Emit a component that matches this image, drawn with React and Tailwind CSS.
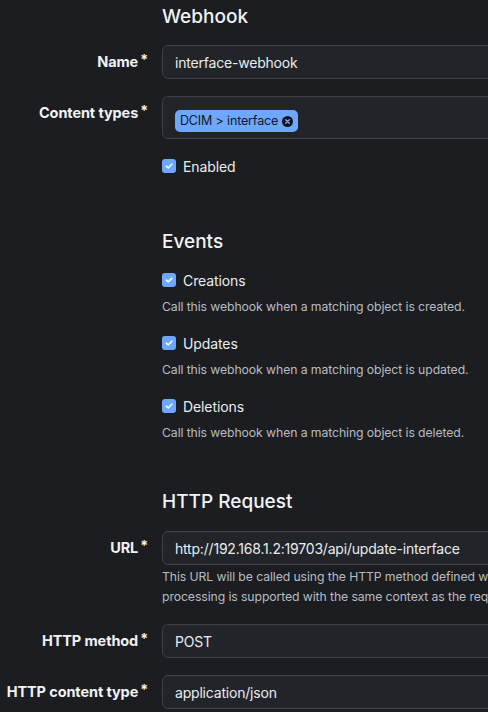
import React from "react";

const font = { fontFamily: "Inter, 'Noto Sans', sans-serif" };

function Label({ children, top }) {
  return (
    <div className={`w-[148px] shrink-0 flex justify-end ${top ? "items-start" : "items-center"} h-[34px] whitespace-nowrap`}>
      <span className="text-[14.5px] font-bold text-[#f1f3f5] leading-[34px] tracking-[-0.1px]">{children}</span>
      <span className="text-[14px] font-bold text-[#f1f3f5] leading-none ml-[2px] mt-[8px] self-start">*</span>
    </div>
  );
}

function Input({ value, className = "" }) {
  return (
    <div className={`ml-[14px] w-[360px] shrink-0 h-[34px] rounded-[6px] border border-[#3d4148] bg-[#212428] flex items-center pl-[12px] text-[14px] tracking-[-0.2px] text-[#e9ecef] whitespace-nowrap ${className}`}>
      {value}
    </div>
  );
}

function Check({ label }) {
  return (
    <div className="flex items-center h-[24px] pl-[162px]">
      <div className="w-[14px] h-[14px] rounded-[3px] bg-[#6ea8fe] flex items-center justify-center">
        <svg width="10" height="10" viewBox="0 0 10 10" fill="none">
          <path d="M2.3 5.2 L4.2 7 L7.8 3.2" stroke="#fff" strokeWidth="1.6" strokeLinecap="round" strokeLinejoin="round" />
        </svg>
      </div>
      <span className="ml-[7px] text-[14px] tracking-[-0.1px] text-[#e9ecef]">{label}</span>
    </div>
  );
}

function Desc({ children, className = "" }) {
  return (
    <div className={`pl-[162px] h-[20px] leading-[20px] text-[12.25px] tracking-[-0.1px] text-[#b8bcc1] whitespace-nowrap ${className}`}>
      {children}
    </div>
  );
}

function Heading({ children, className = "" }) {
  return (
    <div className={`pl-[162px] h-[34px] leading-[34px] text-[19px] font-medium text-[#f1f3f5] ${className}`}>
      {children}
    </div>
  );
}

export default function App() {
  return (
    <div className="w-[488px] h-[712px] overflow-hidden bg-[#1b1d21]" style={font}>
      <Heading>Webhook</Heading>
      <div className="flex mt-[11px]">
        <Label>Name</Label>
        <Input value="interface-webhook" />
      </div>
      <div className="flex mt-[17px]">
        <Label top>Content types</Label>
        <div className="ml-[14px] w-[360px] shrink-0 h-[43px] rounded-[6px] border border-[#3d4148] bg-[#212428] pl-[12px] pt-[10px]">
          <div className="inline-flex items-center h-[22px] rounded-[5px] bg-[#6ea8fe] pl-[5px] pr-[5px] text-[12.5px] tracking-[-0.15px] text-[#141619]">
            <span>DCIM &gt; interface</span>
            <svg className="ml-[4px]" width="11" height="11" viewBox="0 0 12 12">
              <circle cx="6" cy="6" r="6" fill="#141619" />
              <path d="M4 4 L8 8 M8 4 L4 8" stroke="#6ea8fe" strokeWidth="1.5" strokeLinecap="round" />
            </svg>
          </div>
        </div>
      </div>
      <div className="mt-[15px]">
        <Check label="Enabled" />
      </div>
      <Heading className="mt-[47px]">Events</Heading>
      <div className="mt-[9px]"><Check label="Creations" /></div>
      <Desc className="mt-[5px]">Call this webhook when a matching object is created.</Desc>
      <div className="mt-[14px]"><Check label="Updates" /></div>
      <Desc className="mt-[5px]">Call this webhook when a matching object is updated.</Desc>
      <div className="mt-[14px]"><Check label="Deletions" /></div>
      <Desc className="mt-[5px]">Call this webhook when a matching object is deleted.</Desc>
      <Heading className="mt-[42px]">HTTP Request</Heading>
      <div className="flex mt-[12px]">
        <Label>URL</Label>
        <Input value="http://192.168.1.2:19703/api/update-interface" />
      </div>
      <div className="mt-[2px] overflow-hidden">
        <Desc>This URL will be called using the HTTP method defined when the webhook is called.</Desc>
        <Desc>processing is supported with the same context as the request body.</Desc>
      </div>
      <div className="flex mt-[17px]">
        <Label>HTTP method</Label>
        <Input value="POST" />
      </div>
      <div className="flex mt-[17px]">
        <Label>HTTP content type</Label>
        <Input value="application/json" />
      </div>
    </div>
  );
}
